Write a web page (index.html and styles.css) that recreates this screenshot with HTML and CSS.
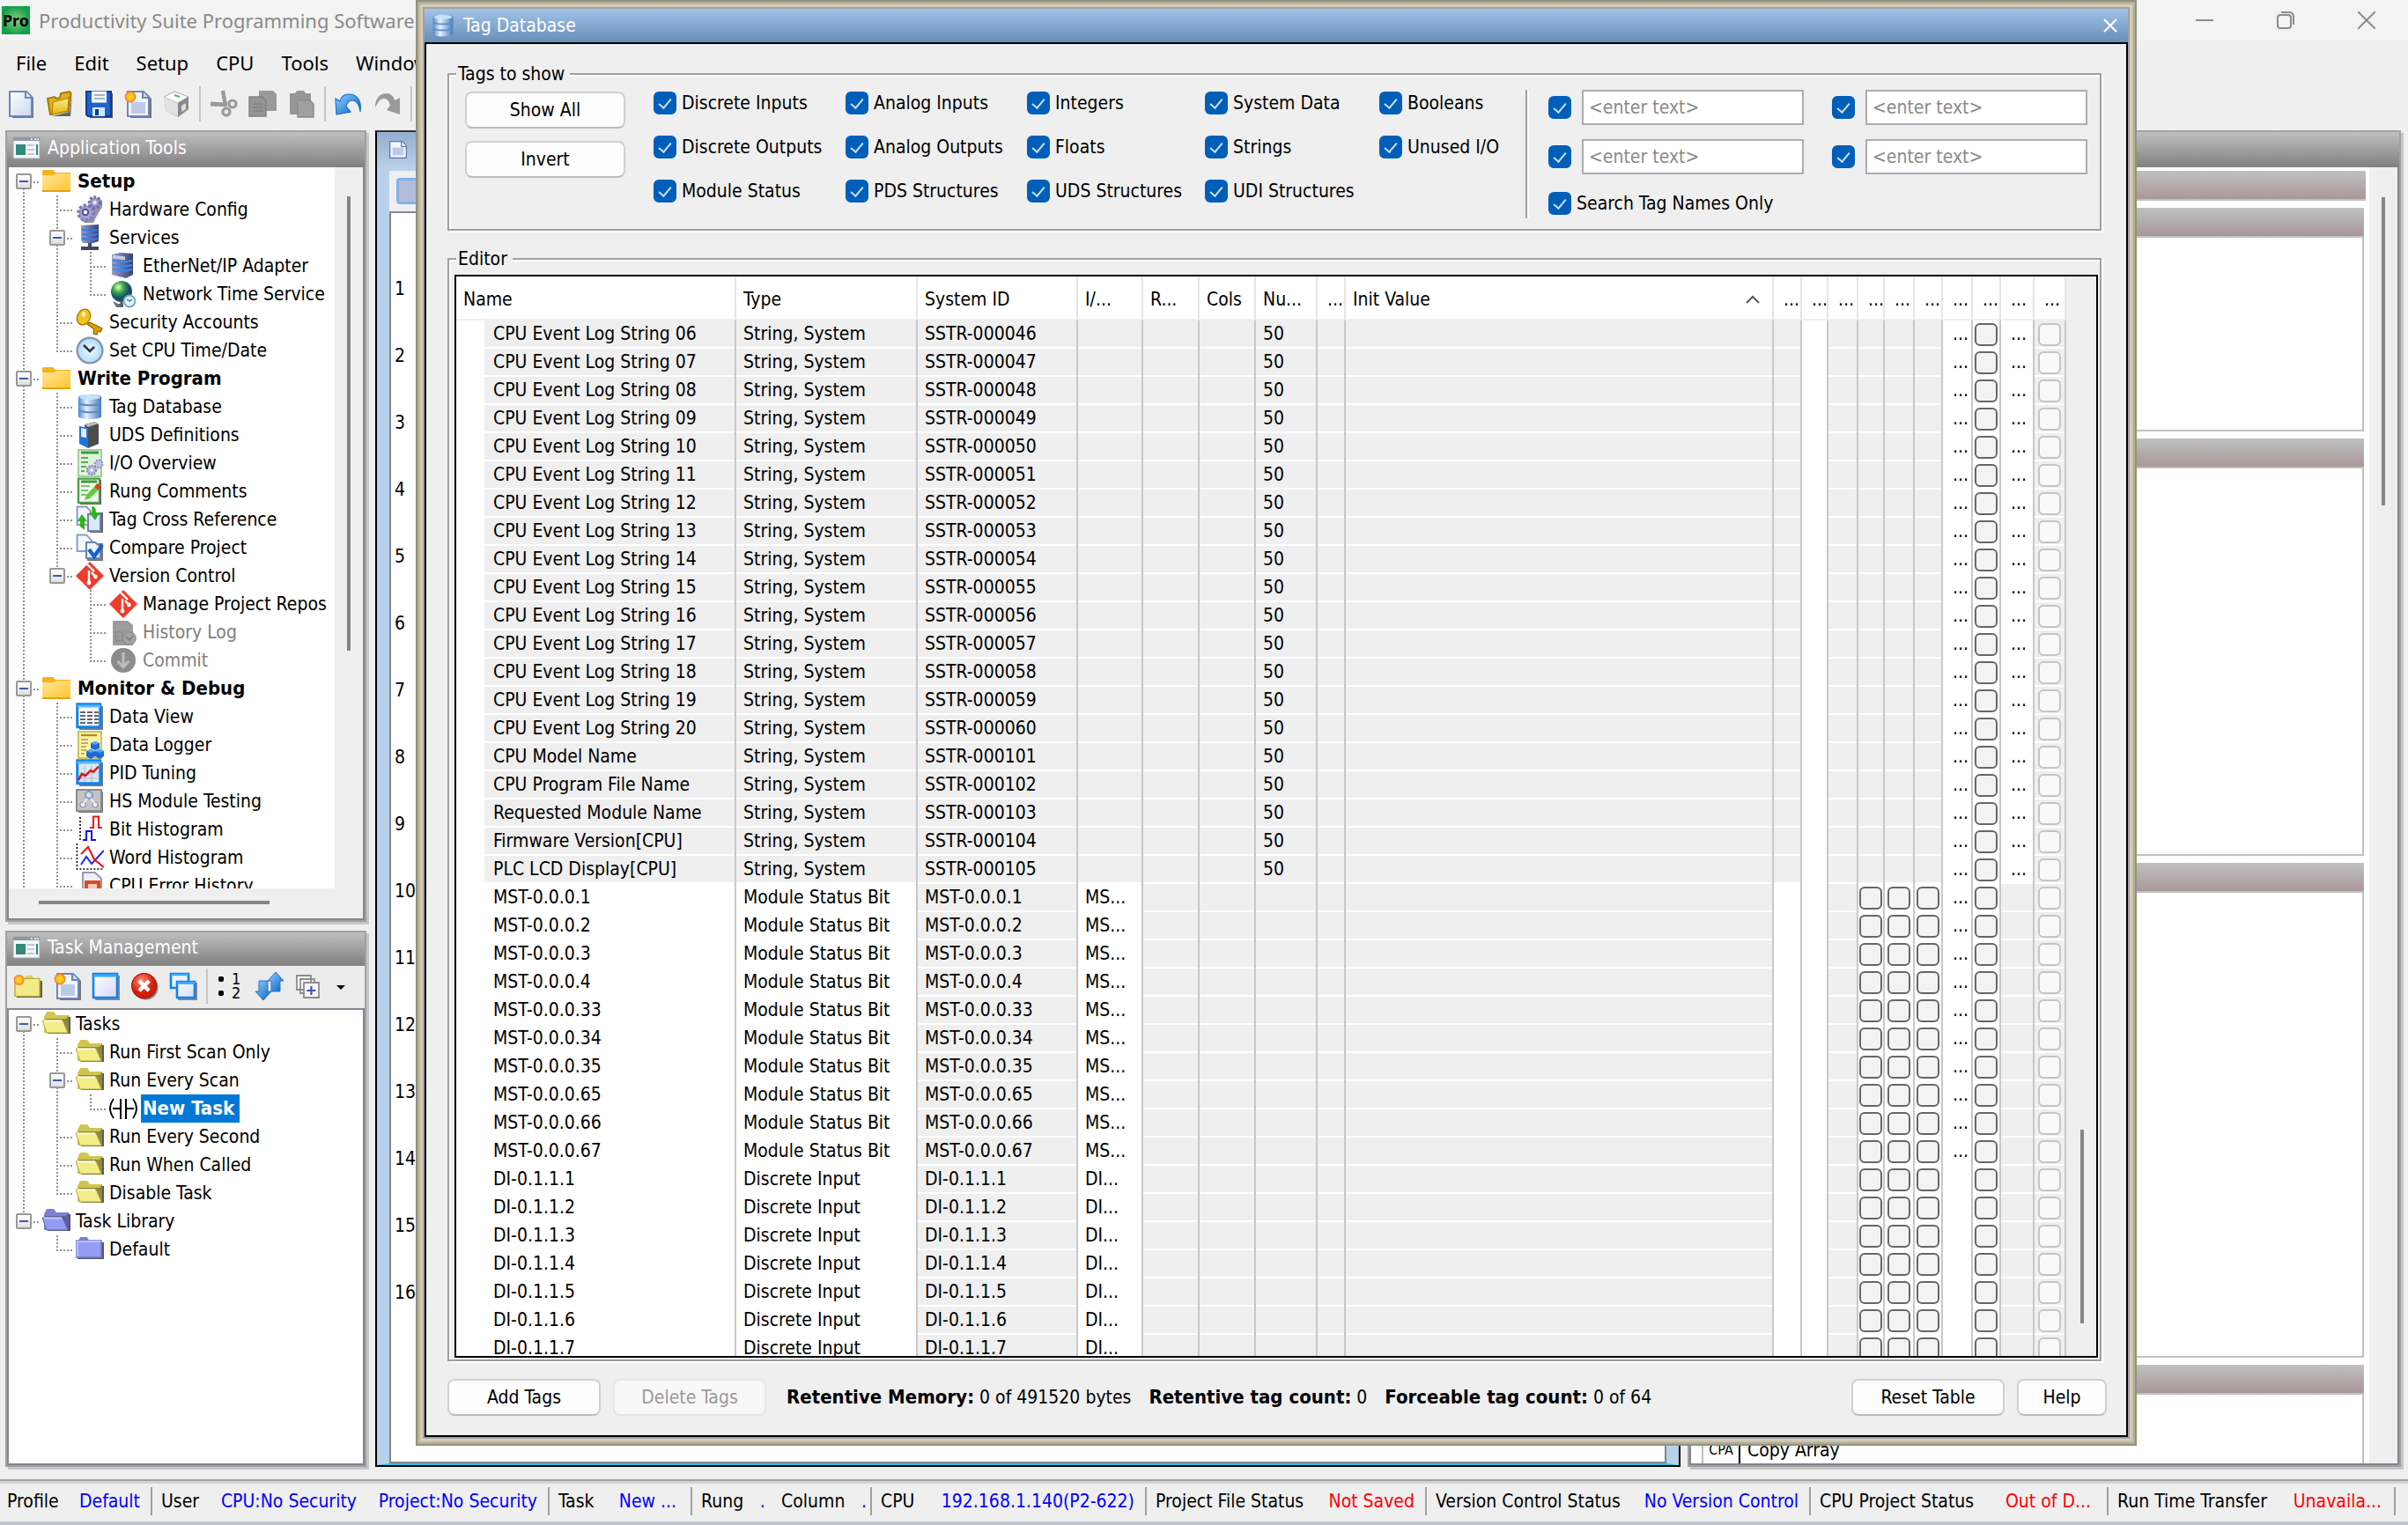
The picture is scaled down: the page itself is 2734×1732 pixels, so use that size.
FILE: index.html
```html
<!DOCTYPE html>
<html lang="en">
<head>
<meta charset="utf-8">
<title>Productivity Suite Programming Software</title>
<link rel="stylesheet" href="styles.css">
</head>
<body>
<svg class="sprite" aria-hidden="true">
  <defs>
    <linearGradient id="gPage" x1="0" y1="0" x2="1" y2="1"><stop offset="0" stop-color="#fff"/><stop offset="1" stop-color="#c9d6ee"/></linearGradient>
    <linearGradient id="gWin" x1="0" y1="0" x2="1" y2="1"><stop offset="0" stop-color="#fff"/><stop offset="1" stop-color="#d9d6fa"/></linearGradient>
    <linearGradient id="gFold" x1="0" y1="0" x2="1" y2="1"><stop offset="0" stop-color="#ffe49a"/><stop offset="1" stop-color="#ffc62e"/></linearGradient>
    <linearGradient id="gGold" x1="0" y1="0" x2="0" y2="1"><stop offset="0" stop-color="#fff3a0"/><stop offset="1" stop-color="#e8b400"/></linearGradient>
    <linearGradient id="gDb" x1="0" y1="0" x2="1" y2="0"><stop offset="0" stop-color="#4f88cf"/><stop offset=".35" stop-color="#e6f2ff"/><stop offset="1" stop-color="#4779bd"/></linearGradient>
    <linearGradient id="gSrv" x1="0" y1="0" x2="1" y2="0"><stop offset="0" stop-color="#9a9cc4"/><stop offset=".6" stop-color="#5f64a0"/><stop offset="1" stop-color="#3c3f6e"/></linearGradient>
    <linearGradient id="gArrow" x1="0" y1="0" x2="1" y2="1"><stop offset="0" stop-color="#8fd0ff"/><stop offset="1" stop-color="#0a5fc4"/></linearGradient>
    <radialGradient id="gPro"><stop offset="0" stop-color="#8fd07c"/><stop offset="1" stop-color="#14a04a"/></radialGradient>
    <radialGradient id="gRed" cx=".4" cy=".3"><stop offset="0" stop-color="#ff8a70"/><stop offset="1" stop-color="#d41c08"/></radialGradient>
    <radialGradient id="gGlobe" cx=".35" cy=".3"><stop offset="0" stop-color="#eaffd0"/><stop offset=".5" stop-color="#3faa4a"/><stop offset="1" stop-color="#14506a"/></radialGradient>
    <radialGradient id="gSpark"><stop offset="0" stop-color="#ffe21a"/><stop offset=".55" stop-color="#ffc21a"/><stop offset="1" stop-color="#ff6a3c"/></radialGradient>
    <radialGradient id="gClock"><stop offset="0" stop-color="#f2fbff"/><stop offset="1" stop-color="#a9dcfa"/></radialGradient>

    <symbol id="i-pro" viewBox="0 0 16 16"><rect width="16" height="16" fill="url(#gPro)"/></symbol>
    <symbol id="i-new" viewBox="0 0 16 16"><path d="M3 1.5h9l3 3V16H3z" fill="#777"/><path d="M1.5 1h9.500l3 3v11H1.500z" fill="url(#gPage)" stroke="#6e86b8"/><path d="M10.500 1v3.500H14" fill="#dfe8f8" stroke="#6e86b8"/></symbol>
    <symbol id="i-open" viewBox="0 0 16 16"><path d="M3.500 15l10-2.500L15 3l-1 12z" fill="#666"/><path d="M1 5l4-1 1 1 2-.5L8.500 2 13.500 1l.8 1-1.300 10L2.500 14z" fill="#e0b020" stroke="#a47c00"/><path d="M4 7l8-2 1-1-.5 8L3.500 14z" fill="url(#gGold)" stroke="#b08a08" stroke-width=".6"/></symbol>
    <symbol id="i-save" viewBox="0 0 16 16"><path d="M2 2h14v14H3z" fill="#555"/><path d="M1 1h14v14H2l-1-1z" fill="#1d63c8" stroke="#0c3c94"/><path d="M4 .8h8.500v6.500H4z" fill="#f2f5fa"/><path d="M5.500 3h6M5.500 5h6" stroke="#a9b2c4"/><path d="M4.500 10h7v5h-7z" fill="#d7e6f7"/><path d="M6 11h2v3.500H6z" fill="#0c3c94"/></symbol>
    <symbol id="i-newdoc" viewBox="0 0 16 16"><path d="M4 2h9l3 3v11H4z" fill="#777"/><path d="M2.500 1h9l3 3v11h-12z" fill="#f2f6ff" stroke="#6e86b8"/><path d="M11 1v3.500h3.500" fill="#cddaf4" stroke="#6e86b8"/><path d="M4.500 7h8v6.500h-8z" fill="#bccbe8"/><circle cx="4" cy="4" r="3.200" fill="url(#gSpark)"/></symbol>
    <symbol id="i-doc" viewBox="0 0 16 16"><path d="M.5 .5h11l4 4v11H.5z" fill="#f2f6ff" stroke="#5a76b0"/><path d="M11 .5v4.500h4.500" fill="#fff" stroke="#5a76b0"/><path d="M3 6h10v7H3z" fill="#bccbe8"/></symbol>
    <symbol id="i-cube" viewBox="0 0 16 16"><path d="M1 4l6-3 8 3v7l-6 4.500L2 12z" fill="#bbb"/><path d="M1 4l6-3 8 3-6 3.500z" fill="#fff" stroke="#aaa" stroke-width=".5"/><path d="M1 4l8 3.500V15l-7-3z" fill="#e2e2e2"/><path d="M9 7.500L15 4v7l-6 4.500z" fill="#8a8a8a"/><path d="M11 9l2.500-1.500V11L11 12.500z" fill="#ddd"/><path d="M7 3l3 1" stroke="#57b36b"/></symbol>
    <symbol id="i-cut" viewBox="0 0 16 16"><path d="M7.500 .5L9 9" stroke="#9a9a9a" stroke-width="2.200"/><path d="M.5 8L10 8.500" stroke="#9a9a9a" stroke-width="2.400"/><circle cx="13" cy="8" r="2" fill="none" stroke="#9a9a9a" stroke-width="1.600"/><circle cx="9.500" cy="12.500" r="2" fill="none" stroke="#9a9a9a" stroke-width="1.600"/></symbol>
    <symbol id="i-copy" viewBox="0 0 16 16"><path d="M6 .5h8l2 2V12H6z" fill="#9a9a9a"/><path d="M.5 4H8l2 2v9H.5z" fill="#949494" stroke="#808080" stroke-width=".7"/><path d="M2.500 8h5.500M2.500 10h5.500M2.500 12h5.500" stroke="#828282" stroke-width=".7"/></symbol>
    <symbol id="i-paste" viewBox="0 0 16 16"><path d="M1.500 2h3L5.500.5h4l1 1.500h3V14h-12z" fill="#969696"/><path d="M6 6h7l2 2v7.500H6z" fill="#a0a0a0" stroke="#8a8a8a" stroke-width=".7"/></symbol>
    <symbol id="i-undo" viewBox="0 0 16 16"><path d="M14.500 12.500c1-6.500-2-10-6.500-10-3 0-4.500 2-5 4L.5 5 1 14l8-1.500L6.500 9.500C7 7 8.500 6 10 6c2.500 0 4 3 4.500 6.500z" fill="url(#gArrow)" stroke="#1a6cc8" stroke-width=".6"/></symbol>
    <symbol id="i-redo" viewBox="0 0 16 16"><path d="M1 10C1 5 3.500 2 7.500 2 10 2 11.500 4 12 6l3-1.500V14L7.500 11.500 9.500 9C9 6.500 8 5 6 5 3 5 2.500 8 1 10z" fill="#9a9a9a"/></symbol>
    <symbol id="i-panel" viewBox="0 0 32 26"><rect x="1" y="1" width="30" height="24" fill="#f4f6f8" stroke="#9aa" stroke-width="1"/><rect x="1" y="1" width="30" height="4" fill="#8d98a8"/><path d="M21 3h2M25 3h2M28 3h2" stroke="#fff" stroke-width="1.500"/><rect x="4" y="9" width="11" height="12" fill="#2f8a78"/><path d="M17 10h8M17 15h8M17 20h8" stroke="#c5c9cf" stroke-width="2"/><path d="M28 9v12" stroke="#2f8a78" stroke-width="2"/></symbol>
    <symbol id="i-folder" viewBox="0 0 16 16"><path d="M0 2.500q0-1 1-1h5l1.500 1.500H16V13.500H0z" fill="#f6b21a"/><path d="M0 4.500h6.500L8 3.500h8v10H0z" fill="url(#gFold)"/><path d="M0 13h16v1H0z" fill="#e8a012"/></symbol>
    <symbol id="i-gears" viewBox="0 0 16 16"><path d="M2 12.500l3 3h5l2-4 3-5V3l-2-1.500z" fill="#66667c" opacity=".7"/><circle cx="5.800" cy="9.800" r="4.200" fill="#a4a4d8" stroke="#8080b8" stroke-width="2" stroke-dasharray="1.600 1"/><circle cx="5.500" cy="9.500" r="1.600" fill="#fff" stroke="#505088"/><circle cx="10.800" cy="4" r="3" fill="#9c9cd2" stroke="#7070a8" stroke-width="1.800" stroke-dasharray="1.300 .9"/><circle cx="10.800" cy="4" r="1.100" fill="#e8e8fa"/></symbol>
    <symbol id="i-service" viewBox="0 0 16 16"><path d="M3 1l10-.5V10l-3 1H4L3 9.500z" fill="url(#gSrv)"/><path d="M3.500 3.500l6 .5 3-.5M3.500 6l6 .5 3-.5M3.500 8.500l6 .5 3-.5" stroke="#2f80e8" fill="none"/><path d="M7 11h2v2h4v2H3v-2h4z" fill="#44445c"/></symbol>
    <symbol id="i-server" viewBox="0 0 16 16"><path d="M1.500 1.500l5-1 7 .5v12l-4 2-8-2z" fill="url(#gSrv)"/><path d="M2 5l7 .7 4-.7M2 7.500l7 .7 4-.7M2 10l7 .7 4-.7" stroke="#2f8cf5" fill="none"/><path d="M2 1.800l7 1v2l-7-1z" fill="#c8c8e0"/></symbol>
    <symbol id="i-globe" viewBox="0 0 16 16"><path d="M2 12l3 1.500h3v2H4z" fill="#68707c"/><circle cx="7" cy="6.500" r="6" fill="url(#gGlobe)"/><path d="M7 12v3" stroke="#555" stroke-width="1.500"/><circle cx="11.500" cy="12" r="3.200" fill="#e4f4ff" stroke="#79a9cc"/><path d="M10 11l1.500 1 1.500-1" stroke="#6a8aa8" fill="none" stroke-width=".8"/></symbol>
    <symbol id="i-key" viewBox="0 0 16 16"><path d="M8 8l7 3.500-1 2-1.500-.5-.5 2-2-.5.500-2.500L6.500 9z" fill="#e0a000" stroke="#8a6400" stroke-width=".6"/><ellipse cx="4.500" cy="5" rx="3.600" ry="4.600" transform="rotate(25 4.500 5)" fill="#f6c41a" stroke="#a87800" stroke-width=".7"/><ellipse cx="4.500" cy="3.500" rx="1" ry="1.500" fill="#fff8d8"/></symbol>
    <symbol id="i-clock" viewBox="0 0 16 16"><circle cx="8" cy="8" r="7.200" fill="url(#gClock)" stroke="#8a93a8" stroke-width="1.200"/><path d="M4.500 5L8 8.500 10.500 6" fill="none" stroke="#334" stroke-width="1.300"/></symbol>
    <symbol id="i-db" viewBox="0 0 16 16"><path d="M1.500 2.500c0-2 13-2 13 0v11c0 2-13 2-13 0z" fill="url(#gDb)"/><ellipse cx="8" cy="2.500" rx="6" ry="1.400" fill="#c4e2f6"/><path d="M1.500 6c3 1.500 10 1.500 13 0M1.500 10c3 1.500 10 1.500 13 0" stroke="#5c8cc8" fill="none"/></symbol>
    <symbol id="i-binder" viewBox="0 0 16 16"><path d="M5 2l6-1.500L13 2v11l-6 2.500z" fill="#4c4c4c"/><path d="M2 3l5 1v11.500L2 13z" fill="#1f74d8"/><path d="M3 4l3 .6v5L3 9z" fill="#e8e8fa"/><path d="M5 2l6-1.500 2 1L7 3.500z" fill="#bbb"/></symbol>
    <symbol id="i-iolist" viewBox="0 0 16 16"><path d="M1.500 .5h13v15h-13z" fill="#dff2dc" stroke="#a4cca0"/><path d="M3 2h10" stroke="#3c9c38" stroke-width="1.500"/><path d="M3 5h4M3 7.500h4M3 10h3M3 12.500h2" stroke="#58b050"/><circle cx="9" cy="12" r="2.600" fill="#b4b4dc" stroke="#8c8cc0" stroke-dasharray="1 .7"/><circle cx="13" cy="8.500" r="2.200" fill="#c0c0e4" stroke="#8c8cc0" stroke-dasharray="1 .7"/><circle cx="9" cy="12" r=".9" fill="#fff"/></symbol>
    <symbol id="i-comment" viewBox="0 0 16 16"><path d="M2.500 1.500h12v14h-12z" fill="#555"/><path d="M1.500 .8h12v13.700h-12z" fill="#f0faee" stroke="#4f9c4a" stroke-width="1.200"/><path d="M3 2.500h9" stroke="#3c9c38" stroke-width="1.500"/><path d="M3 5h5M3 7.500h4M3 10h3" stroke="#7cc474"/><path d="M5 13l1-3 5-5 2 2-5 5z" fill="#62cc3c"/><path d="M10.500 5.500L12 3.500l2.500 1.500-1.500 2.500z" fill="#e0402c"/></symbol>
    <symbol id="i-xref" viewBox="0 0 16 16"><path d="M8 4h7.500v11.500H8z" fill="#666"/><path d="M.8.8H6l2.500 2.500V11H.8z" fill="#f4f7ff" stroke="#8a9cc0"/><path d="M7 5h7v9.500H7z" fill="#dce8fa" stroke="#6e82ac"/><path d="M9 .5c2 0 2.500 1.500 2.500 3.500H13.500L11 8.500 7.500 4h1.800z" fill="#2cb41c"/><path d="M.8 9l2.700-4L6.500 9H5v5L2.500 12V9z" fill="#2cb41c"/></symbol>
    <symbol id="i-compare" viewBox="0 0 16 16"><path d="M.8.8H6l3 3V10H.8z" fill="#f4f7ff" stroke="#8a9cc0"/><path d="M6.500 5.500H15.500v10H6.500z" fill="#777"/><path d="M6 5h5l3 2.500V14H6z" fill="#eef3ff" stroke="#6e82ac"/><path d="M7.500 9l3 4L15 6.500" fill="none" stroke="#1464d0" stroke-width="2.200"/></symbol>
    <symbol id="i-git" viewBox="0 0 16 16"><path d="M8 0l8 8-8 8-8-8z" fill="#f03c2e"/><path d="M6.500 1.500l4 4M7.500 5v7M9 6l2.500 3" stroke="#fff" stroke-width="1.200" fill="none"/><circle cx="7.500" cy="12" r="1.200" fill="#fff"/><circle cx="11.200" cy="8.500" r="1.200" fill="#fff"/></symbol>
    <symbol id="i-history" viewBox="0 0 16 16"><path d="M2 1.500h8.500L13.500 4v11.500H2z" fill="#9c9c9c"/><path d="M3.500 8h4v5h-4zM5 9v4" stroke="#8a8a8a" fill="none" stroke-width=".7"/><circle cx="11.500" cy="11.500" r="3.600" fill="#a4a4a4" stroke="#8c8c8c" stroke-width=".6"/><path d="M9.500 10.500l2 2 2-2.500" stroke="#808080" fill="none"/></symbol>
    <symbol id="i-commit" viewBox="0 0 16 16"><circle cx="8" cy="8" r="7" fill="#8c8c8c"/><path d="M8 3.500v8M4.800 8.500L8 11.800l3.200-3.300" stroke="#bcbcbc" stroke-width="1.600" fill="none"/></symbol>
    <symbol id="i-dataview" viewBox="0 0 16 16"><path d="M2 2h13.500v13.500H2z" fill="#777"/><path d="M.9.900h13v13H.9z" fill="#f8f8ff" stroke="#0c84f0" stroke-width="1.500"/><path d="M1 2h13" stroke="#5cb8ff" stroke-width="1.500"/><path d="M2.500 5.500h3M6.500 5.500h3M10.500 5.500h2.500M2.500 7.500h3M6.500 7.500h3M10.500 7.500h2.500M2.500 9.500h3M6.500 9.500h3M10.500 9.500h2.500M2.500 11.500h3M6.500 11.500h3M10.500 11.500h2.500" stroke="#666"/></symbol>
    <symbol id="i-logger" viewBox="0 0 16 16"><path d="M1.500 .5h13v15h-13z" fill="#fbf4a8" stroke="#d0c060"/><path d="M3 2.500h9" stroke="#b08a1c" stroke-width="1.200"/><path d="M3 5h4M3 7h4M3 9h3M3 11h3M3 13h2" stroke="#b0983c" stroke-width=".8"/><path d="M8.500 7l2.500-1 2.500 1v3l-2.500 1-2.500-1zM6 11.500l2.500-1 2.500 1v3l-2.500 1.500L6 14.500zM11 11.500l2.500-1 2.500 1v3L13.500 16 11 14.500z" fill="#1a6cd8"/><path d="M8.500 7l2.500-1 2.500 1-2.500 1zM6 11.500l2.500-1 2.500 1-2.500 1zM11 11.500l2.500-1 2.500 1-2.500 1z" fill="#58a4f4"/></symbol>
    <symbol id="i-pid" viewBox="0 0 16 16"><path d="M2 2h13.500v13.500H2z" fill="#777"/><path d="M.9.900h13v13H.9z" fill="#dce6ee" stroke="#0c84f0" stroke-width="1.500"/><path d="M1 2h13" stroke="#5cb8ff" stroke-width="1.500"/><path d="M5 4v9M9 4v9M2 8h11M2 11h11" stroke="#b4c0cc" stroke-width=".6"/><path d="M1.500 12l2-3.500 2 1 3-3 1.500.8 3-3" stroke="#d41c1c" stroke-width="1.300" fill="none"/></symbol>
    <symbol id="i-module" viewBox="0 0 16 16"><path d="M1.500 2.500h14v12h-14z" fill="#777"/><path d="M.5 1.500h14v12H.5z" fill="#c4c4c4" stroke="#8c8c8c"/><circle cx="7.500" cy="4.500" r="2" fill="#d8e0f4" stroke="#8898bc"/><circle cx="4" cy="10" r="1.500" fill="#eef" stroke="#8898bc" stroke-width=".6"/><circle cx="11" cy="10" r="1.500" fill="#eef" stroke="#8898bc" stroke-width=".6"/><path d="M6.500 6.500L4.500 9M8.500 6.500l2 2.500" stroke="#eef"/></symbol>
    <symbol id="i-bits" viewBox="0 0 16 16"><path d="M2.500 1v14" stroke="#000" stroke-width=".8" stroke-dasharray="1 1"/><path d="M8 7h2V.7h3V7h2" stroke="#f01010" fill="none"/><path d="M4 14h2V9h3v5h2.500" stroke="#1010f0" fill="none"/></symbol>
    <symbol id="i-words" viewBox="0 0 16 16"><path d="M.7 0v14.500H16" stroke="#000" stroke-width=".8" stroke-dasharray="1 1" fill="none"/><path d="M3 12l3-4.500 3 4L16 4" stroke="#2424f0" fill="none"/><path d="M3 6l4-4 3.500 7L16 13.500" stroke="#f01010" fill="none"/></symbol>
    <symbol id="i-error" viewBox="0 0 16 16"><path d="M4 .5h7l3.500 3.500V16H4z" fill="#f0f0f8" stroke="#9898b0"/><path d="M5 5h9v9H5z" fill="#e04a20"/><path d="M7 7h5v7H7z" fill="#fff" opacity=".7"/></symbol>

    <symbol id="i-yopen" viewBox="0 0 16 16"><path d="M3 4h13v9.500H3z" fill="#5c5c4c"/><path d="M1 4l1.500-3h4L8 3h7v10H1z" fill="#cfc650"/><path d="M1 5h12.500L15 3v10h-1z" fill="#8e8840"/><path d="M0 6h11.500L14.500 13H2.500z" fill="#f4ec86" stroke="#b8ae40" stroke-width=".5"/><path d="M1 6.200h10" stroke="#fffce0"/></symbol>
    <symbol id="i-bopen" viewBox="0 0 16 16"><path d="M3 4h13v9.500H3z" fill="#555568"/><path d="M1 4l1.500-3h4L8 3h7v10H1z" fill="#7c80d0"/><path d="M1 5h12.500L15 3v10h-1z" fill="#5c609c"/><path d="M0 6h11.500L14.500 13H2.500z" fill="#949cf4" stroke="#6064b0" stroke-width=".5"/><path d="M1 6.200h10" stroke="#c8ccf8"/></symbol>
    <symbol id="i-bclosed" viewBox="0 0 16 16"><path d="M1 4h15v9.500H1z" fill="#555568"/><path d="M1.500 3l1-2h4l1 2z" fill="#7c80d0"/><path d="M.5 3h14v9.500H.5z" fill="#949cf4" stroke="#7478cc" stroke-width=".8"/><path d="M1 12V3.500h13" stroke="#c8ccf8" fill="none" stroke-width=".7"/></symbol>
    <symbol id="i-rungs" viewBox="0 0 32 32"><path d="M5 5Q-3 16 5 27M27 5q8 11 0 22" fill="none" stroke="#000" stroke-width="2"/><path d="M4 16h8M20 16h8M13 5v23M19 5v23" stroke="#000" stroke-width="2"/></symbol>
    <symbol id="i-newfolder" viewBox="0 0 16 16"><path d="M1.500 5H16v9.500H1.500z" fill="#66623c"/><path d="M6 3.500L7 2h3l1 1.500z" fill="#d8ce60"/><path d="M.5 3.700h14v10H.5z" fill="#f2ea84" stroke="#b8ae48" stroke-width=".7"/><circle cx="2.800" cy="4.500" r="3" fill="url(#gSpark)"/></symbol>
    <symbol id="i-window" viewBox="0 0 16 16"><path d="M2 2h14v14H2z" fill="#888"/><path d="M1 1h13.500v13.500H1z" fill="url(#gWin)" stroke="#0c84f0" stroke-width="1.300"/><path d="M1 2h13.500" stroke="#3ca8ff" stroke-width="1.600"/></symbol>
    <symbol id="i-delete" viewBox="0 0 16 16"><circle cx="8.800" cy="8.800" r="7" fill="#888"/><circle cx="7.800" cy="7.800" r="7" fill="url(#gRed)" stroke="#b01404" stroke-width=".6"/><path d="M5 5l5.600 5.600M10.600 5L5 10.600" stroke="#fff" stroke-width="2.200"/></symbol>
    <symbol id="i-cascade" viewBox="0 0 16 16"><path d="M1 1h10v8H1z" fill="#eef4ff" stroke="#0c84f0" stroke-width="1.300"/><path d="M1 1.500h10" stroke="#3ca8ff" stroke-width="1.200"/><path d="M5 6h11v10H5z" fill="#888"/><path d="M4.500 5.500H14.500v9h-10z" fill="url(#gWin)" stroke="#0c84f0" stroke-width="1.300"/><path d="M4.500 6.200h10" stroke="#3ca8ff" stroke-width="1.500"/></symbol>
    <symbol id="i-updown" viewBox="0 0 16 16"><path d="M2 5h5v6h2l-4.500 5L0 11h2z" fill="url(#gArrow)" stroke="#2a74c4" stroke-width=".5"/><path d="M11.500 0L16 5h-2v6H9V5H7z" fill="url(#gArrow)" stroke="#2a74c4" stroke-width=".5"/></symbol>
    <symbol id="i-stack" viewBox="0 0 16 16"><g fill="#f6f6f6" stroke="#8c8c8c" stroke-width=".9"><path d="M1.500 2h8v8h-8zM3.500 4h8v8h-8z"/><path d="M5.500 6h8.500v8.500H5.500z"/></g><path d="M9.700 8v5M7.200 10.500h5" stroke="#3c54a8" stroke-width="1.100"/></symbol>
  </defs>
</svg>

<div class="app">
  <header class="titlebar">
    <span class="app-logo"><svg class="ic"><use href="#i-pro"/></svg><b>Pro</b></span>
    <span class="app-title">Productivity Suite Programming Software</span>
    <div class="win-buttons">
      <button type="button" aria-label="Minimize"><svg viewBox="0 0 20 20"><path d="M0 10h20"/></svg></button>
      <button type="button" aria-label="Restore"><svg viewBox="0 0 20 20"><rect x="1" y="4" width="15" height="15" rx="3"/><path d="M5 1h9q5 0 5 5v9"/></svg></button>
      <button type="button" aria-label="Close"><svg viewBox="0 0 20 20"><path d="M0 0l20 20M20 0L0 20"/></svg></button>
    </div>
  </header>
  <nav class="menubar" aria-label="Main menu">
    <button type="button">File</button><button type="button">Edit</button><button type="button">Setup</button><button type="button">CPU</button><button type="button">Tools</button><button type="button">Window</button>
  </nav>
  <div class="toolbar">
    <button type="button" aria-label="New"><svg class="ic"><use href="#i-new"/></svg></button>
    <button type="button" aria-label="Open"><svg class="ic"><use href="#i-open"/></svg></button>
    <button type="button" aria-label="Save"><svg class="ic"><use href="#i-save"/></svg></button>
    <button type="button" aria-label="New task"><svg class="ic"><use href="#i-newdoc"/></svg></button>
    <button type="button" aria-label="Hardware"><svg class="ic"><use href="#i-cube"/></svg></button>
    <span class="bar-sep"></span>
    <button type="button" aria-label="Cut" disabled><svg class="ic"><use href="#i-cut"/></svg></button>
    <button type="button" aria-label="Copy" disabled><svg class="ic"><use href="#i-copy"/></svg></button>
    <button type="button" aria-label="Paste" disabled><svg class="ic"><use href="#i-paste"/></svg></button>
    <span class="bar-sep"></span>
    <button type="button" aria-label="Undo"><svg class="ic"><use href="#i-undo"/></svg></button>
    <button type="button" aria-label="Redo" disabled><svg class="ic"><use href="#i-redo"/></svg></button>
    <span class="bar-sep"></span>
  </div>

  <main class="workspace">
    <div class="side">
      <section class="panel">
        <h2 class="panel-head"><svg class="panel-ic"><use href="#i-panel"/></svg>Application Tools</h2>
        <div class="scroll-grid">
          <ul class="tree" id="tools-tree"></ul>
          <div class="vscroll"><span class="thumb"></span></div>
          <div class="hscroll"><span class="thumb"></span></div>
        </div>
      </section>
      <section class="panel">
        <h2 class="panel-head short"><svg class="panel-ic"><use href="#i-panel"/></svg>Task Management</h2>
        <div class="task-bar">
          <button type="button" aria-label="New folder"><svg class="ic"><use href="#i-newfolder"/></svg></button>
          <button type="button" aria-label="New task"><svg class="ic"><use href="#i-newdoc"/></svg></button>
          <button type="button" aria-label="Open task"><svg class="ic"><use href="#i-window"/></svg></button>
          <button type="button" aria-label="Delete task"><svg class="ic"><use href="#i-delete"/></svg></button>
          <button type="button" aria-label="Cascade"><svg class="ic"><use href="#i-cascade"/></svg></button>
          <span class="bar-sep"></span>
          <button type="button" class="order" aria-label="Order"><span>1</span><span>2</span></button>
          <button type="button" aria-label="Move"><svg class="ic"><use href="#i-updown"/></svg></button>
          <button type="button" aria-label="Expand all"><svg class="ic"><use href="#i-stack"/></svg></button>
          <span class="caret"></span>
        </div>
        <ul class="tree task-tree" id="task-tree"></ul>
      </section>
    </div>

    <section class="editor">
      <div class="editor-head"><svg class="doc-ic"><use href="#i-doc"/></svg></div>
      <div class="editor-frame">
        <div class="editor-tools"><span class="editor-btn"></span></div>
        <ol class="rungs" id="rungs"></ol>
      </div>
    </section>

    <section class="panel instr">
      <div class="panel-head"></div>
      <div class="instr-body">
        <div class="instr-list">
          <div class="group g0"><div class="bar"></div></div>
          <div class="group g1"><div class="bar"></div></div>
          <div class="group g2"><div class="bar"></div></div>
          <div class="group g3"><div class="bar"></div></div>
          <div class="group g4"><div class="bar"></div><div class="instr-item"><span class="code">CPA</span><span>Copy Array</span></div></div>
        </div>
        <div class="vscroll"><span class="thumb"></span></div>
      </div>
    </section>
  </main>

  <footer class="status">
    <div class="seg s1"><span>Profile</span><span class="blue">Default</span></div>
    <div class="seg s2"><span>User</span><span class="blue">CPU:No Security</span><span class="blue">Project:No Security</span></div>
    <div class="seg s3"><span>Task</span><span class="blue">New ...</span></div>
    <div class="seg s4"><span>Rung</span><span class="blue">.</span><span>Column</span><span class="blue">.</span></div>
    <div class="seg s5"><span>CPU</span><span class="blue">192.168.1.140(P2-622)</span></div>
    <div class="seg s6"><span>Project File Status</span><span class="red">Not Saved</span></div>
    <div class="seg s7"><span>Version Control Status</span><span class="blue">No Version Control</span></div>
    <div class="seg s8"><span>CPU Project Status</span><span class="red">Out of D...</span></div>
    <div class="seg s9"><span>Run Time Transfer</span><span class="red">Unavaila...</span></div>
  </footer>
</div>

<div class="dialog" role="dialog" aria-labelledby="dlg-title">
  <div class="dlg-head">
    <svg class="ic"><use href="#i-db"/></svg><span id="dlg-title">Tag Database</span>
    <button type="button" class="dlg-close" aria-label="Close"><svg viewBox="0 0 16 16"><path d="M1 1l14 14M15 1L1 15"/></svg></button>
  </div>
  <div class="dlg-body">
    <fieldset class="box">
      <legend>Tags to show</legend>
      <div class="filters">
        <div class="filter-btns"><button type="button" class="btn">Show All</button><button type="button" class="btn">Invert</button></div>
        <div class="checks">
          <label><input type="checkbox" checked>Discrete Inputs</label>
          <label><input type="checkbox" checked>Analog Inputs</label>
          <label><input type="checkbox" checked>Integers</label>
          <label><input type="checkbox" checked>System Data</label>
          <label><input type="checkbox" checked>Booleans</label>
          <label><input type="checkbox" checked>Discrete Outputs</label>
          <label><input type="checkbox" checked>Analog Outputs</label>
          <label><input type="checkbox" checked>Floats</label>
          <label><input type="checkbox" checked>Strings</label>
          <label><input type="checkbox" checked>Unused I/O</label>
          <label><input type="checkbox" checked>Module Status</label>
          <label><input type="checkbox" checked>PDS Structures</label>
          <label><input type="checkbox" checked>UDS Structures</label>
          <label><input type="checkbox" checked>UDI Structures</label>
        </div>
        <div class="search">
          <div class="search-grid">
            <input type="checkbox" checked aria-label="Use search 1"><input type="text" placeholder="&lt;enter text&gt;" aria-label="Search 1">
            <input type="checkbox" checked aria-label="Use search 2"><input type="text" placeholder="&lt;enter text&gt;" aria-label="Search 2">
            <input type="checkbox" checked aria-label="Use search 3"><input type="text" placeholder="&lt;enter text&gt;" aria-label="Search 3">
            <input type="checkbox" checked aria-label="Use search 4"><input type="text" placeholder="&lt;enter text&gt;" aria-label="Search 4">
          </div>
          <label><input type="checkbox" checked>Search Tag Names Only</label>
        </div>
      </div>
    </fieldset>
    <fieldset class="box grow">
      <legend>Editor</legend>
      <div class="grid-box">
        <div class="table-wrap">
          <table>
            <colgroup>
              <col class="c-name"><col class="c-type"><col class="c-id"><col class="c-io"><col class="c-rc"><col class="c-rc"><col class="c-num"><col class="c-32"><col>
              <col class="c-32"><col class="c-30"><col class="c-34"><col class="c-30"><col class="c-34"><col class="c-32"><col class="c-34"><col class="c-32"><col class="c-38"><col class="c-36">
            </colgroup>
            <thead><tr>
              <th>Name</th><th>Type</th><th>System ID</th><th>I/...</th><th>R...</th><th>Cols</th><th>Nu...</th><th class="d">...</th>
              <th><span class="sorted">Init Value<svg viewBox="0 0 16 10"><path d="M1 9l7-7 7 7"/></svg></span></th>
              <th class="d">...</th><th class="d">...</th><th class="d">...</th><th class="d">...</th><th class="d">...</th><th class="d">...</th><th class="d">...</th><th class="d">...</th><th class="d">...</th><th class="d">...</th>
            </tr></thead>
            <tbody id="rows"></tbody>
          </table>
        </div>
        <div class="vscroll"><span class="thumb"></span></div>
      </div>
    </fieldset>
    <div class="dlg-foot">
      <button type="button" class="btn">Add Tags</button>
      <button type="button" class="btn" disabled>Delete Tags</button>
      <div class="counts">
        <p><b>Retentive Memory:</b> 0 of 491520 bytes</p>
        <p><b>Retentive tag count:</b> 0</p>
        <p><b>Forceable tag count:</b> 0 of 64</p>
      </div>
      <button type="button" class="btn">Reset Table</button>
      <button type="button" class="btn small">Help</button>
    </div>
  </div>
</div>
<script src="app.js"></script>
</body>
</html>
```
FILE: styles.css
```css
* { box-sizing: border-box; }
html, body { height: 100%; }
body {
  margin: 0; overflow: hidden; background: #efefef; color: #000;
  font: 21px/26px "DejaVu Sans Condensed", "Noto Sans", sans-serif;
}
button, input { font: inherit; color: inherit; margin: 0; }
button { padding: 0; border: 0; background: none; }
ul, ol, p, h2 { margin: 0; padding: 0; list-style: none; }
.sprite { position: absolute; width: 0; height: 0; }
.ic { display: block; width: 32px; height: 32px; flex: none; }
.blue { color: #0000ff; }
.red { color: #ff0000; }

.app { display: flex; flex-direction: column; height: 100vh; }

/* Title, menu and tool bars */
.titlebar { display: flex; align-items: center; gap: 10px; height: 46px; padding-left: 2px; background: #f3f3f3; color: #8a8a8a; font: 22px/30px "Noto Sans", sans-serif; }
.app-logo { display: grid; width: 32px; height: 32px; }
.app-logo > * { grid-area: 1 / 1; }
.app-logo b { color: #000; font-size: 18px; line-height: 32px; text-align: center; z-index: 1; }
.win-buttons { display: flex; gap: 72px; margin-left: auto; padding-right: 37px; }
.win-buttons svg { display: block; width: 20px; height: 20px; fill: none; stroke: #8c8c8c; stroke-width: 2; }
.menubar { display: flex; align-items: center; gap: 31px; height: 50px; padding-left: 18px; font: 22px/30px "Noto Sans", sans-serif; }
.toolbar { display: flex; align-items: center; gap: 12px; height: 44px; padding-left: 8px; }
.bar-sep { width: 2px; height: 40px; margin: 0 -2px; background: #c6c6c6; }

.workspace { flex: 1; min-height: 0; display: grid; grid-template-columns: 412px minmax(0, 1fr) 812px; gap: 8px; padding: 8px 6px 14px 6px; }

/* Docked panels */
.side { display: grid; grid-template-rows: minmax(0, 59fr) minmax(0, 40fr); gap: 10px; padding-right: 2px; min-height: 0; }
.panel { display: flex; flex-direction: column; min-height: 0; border: 2px solid #a0a0a0; box-shadow: 3px 3px 0 #c6c6c6; }
.panel-head { display: flex; align-items: center; gap: 8px; height: 40px; flex: none; padding: 0 6px 4px; background: linear-gradient(#bfbfbf, #808080); color: #fff; font-size: 21px; font-weight: normal; }
.panel-head.short { height: 38px; }
.panel-ic { width: 32px; height: 26px; }
.scroll-grid { flex: 1; min-height: 0; display: grid; grid-template: minmax(0, 1fr) 34px / minmax(0, 1fr) 32px; border: 2px solid #828790; border-top: 0; }
.vscroll, .hscroll { position: relative; background: #efefef; }
.thumb { position: absolute; background: #858585; }
.scroll-grid .vscroll .thumb { left: 14px; width: 4px; top: 4%; height: 63%; }
.hscroll .thumb { top: 14px; height: 4px; left: 34px; right: 74px; }

.tree { background: #fff; overflow: hidden; }
.tree li { display: flex; align-items: center; height: 32px; white-space: nowrap; }
.tree .ic { margin-right: 6px; }
.tree .off { color: #808080; }
.tree .root { font-weight: bold; font-size: 22px; padding-left: 2px; }
.tree .sel { background: #0078d7; color: #fff; font-weight: bold; font-size: 22px; line-height: 32px; margin-left: -2px; padding: 0 6px 0 2px; }
.guide { width: 38px; height: 32px; flex: none; padding: 7px 8px; background-repeat: no-repeat; --v: repeating-linear-gradient(#909090 0 2px, #fff 2px 4px); --h: repeating-linear-gradient(90deg, #909090 0 2px, #fff 2px 4px); }
.g-v { background-image: var(--v); background-size: 2px 32px; background-position: 16px 0; }
.g-t, .g-B { background-image: var(--v), var(--h); background-size: 2px 32px, 20px 2px; background-position: 16px 0, 16px 16px; }
.g-l, .g-E { background-image: var(--v), var(--h); background-size: 2px 16px, 20px 2px; background-position: 16px 0, 16px 16px; }
.g-R { background-image: var(--v), var(--h); background-size: 2px 16px, 20px 2px; background-position: 16px 16px, 16px 16px; }
.toggle { display: block; width: 18px; height: 18px; border: 2px solid #989898; border-radius: 2px; background: linear-gradient(#3c5aa8, #3c5aa8) 2px 6px / 10px 2px no-repeat, linear-gradient(#fff, #dedede); }

.task-bar { display: flex; align-items: center; gap: 12px; height: 48px; flex: none; padding: 0 0 2px 8px; background: #ececec; }
.order { display: flex; flex-direction: column; width: 32px; padding-left: 2px; font: 18px/16px "DejaVu Sans Condensed", sans-serif; }
.order span { display: flex; align-items: center; gap: 9px; }
.order span::before { content: ""; width: 6px; height: 6px; border-radius: 2px; background: #000; }
.caret { border: 5px solid transparent; border-top-color: #000; margin: 8px 0 0 4px; }
.task-tree { flex: 1; border: 2px solid #828790; }

/* Ladder editor window */
.editor { display: flex; flex-direction: column; min-height: 0; border: 2px solid #000; border-top-color: #333; }
.editor-head { height: 44px; flex: none; padding: 10px 14px; background: linear-gradient(#94add0, #bcd2ea); }
.doc-ic { width: 20px; height: 20px; }
.editor-frame { flex: 1; min-height: 0; display: flex; flex-direction: column; border: solid #b9d0ea; border-width: 0 14px 2px 14px; border-bottom-color: #28c4e0; }
.editor-tools { height: 48px; flex: none; padding: 8px; background: #efefef; border-bottom: 2px solid #828790; }
.editor-btn { display: block; width: 60px; height: 30px; border: 3px solid #7fb2ec; border-radius: 4px; background: #b4bcd8; }
.rungs { flex: 1; min-height: 0; overflow: hidden; padding: 48px 0 0 4px; background: #fff; border: 2px solid #828790; border-top: 0; }
.rungs li { height: 76px; line-height: 76px; }

/* Instruction list */
.instr { margin-right: 2px; }
.instr-body { flex: 1; min-height: 0; display: grid; grid-template-columns: minmax(0, 1fr) 32px; border: 2px solid #828790; border-top: 0; }
.instr-list { display: flex; flex-direction: column; gap: 8px; overflow: hidden; padding: 4px 6px 0 12px; background: #fff; }
.instr .thumb { left: 14px; width: 4px; top: 34px; height: 350px; }
.group { flex: none; border: 2px solid #c0c0c0; border-top: 0; }
.group .bar { height: 34px; margin: 0 -2px; background: linear-gradient(#c0c0c0, #a89896); border-bottom: 2px solid #c0c0c0; }
.g0 { height: 34px; border: 0; }
.g1 { height: 254px; }
.g2 { height: 474px; }
.g3 { height: 562px; }
.g4 { height: 300px; }
.instr-item { display: flex; align-items: center; gap: 8px; height: 34px; margin-top: 46px; }
.code { display: flex; align-items: center; justify-content: center; width: 42px; height: 34px; border-right: 2px solid #000; font-size: 16px; }

/* Status bar */
.status { display: flex; align-items: center; height: 52px; flex: none; border-top: 2px solid #a0a0a0; border-bottom: 4px solid #bcc4d2; box-shadow: inset 0 3px 0 #d2d2d2; }
.seg { display: flex; justify-content: space-between; height: 32px; line-height: 32px; padding: 0 12px 0 10px; border-right: 2px solid #a0a0a0; white-space: nowrap; flex: none; }
.s1 { width: 173px; padding-left: 8px; }
.s2 { width: 451px; }
.s3 { width: 162px; padding-right: 16px; }
.s4 { width: 204px; padding-right: 4px; }
.s5 { width: 312px; }
.s6 { width: 318px; }
.s7 { width: 436px; }
.s8 { width: 338px; padding-right: 18px; }
.s9 { width: 326px; padding-right: 14px; }

/* Tag Database window */
.dialog {
  position: absolute; left: 472px; right: 308px; top: 0; bottom: 90px; display: flex; flex-direction: column;
  padding: 8px; border: 2px solid #90937e; background: #efefef;
  box-shadow: inset 0 0 0 8px #a2a0a0;
  box-shadow: inset 0 0 0 2px #b3ac98, inset 0 0 0 4px #cbc2ae, inset 0 0 0 6px #d8cebc, inset 0 0 0 8px #a2a0a0;
}
.dlg-head { display: flex; align-items: center; gap: 6px; height: 38px; flex: none; padding: 0 12px 0 4px; background: linear-gradient(#a2c3e8, #688eb8); color: #fff; }
.dlg-head .ic { width: 34px; height: 28px; }
.dlg-close { margin-left: auto; }
.dlg-close svg { display: block; width: 16px; height: 16px; fill: none; stroke: #fff; stroke-width: 2; }
.dlg-body { flex: 1; min-height: 0; display: flex; flex-direction: column; border: 2px solid #000; padding: 22px 22px 22px 24px; }
.box { min-width: 0; margin: 0 6px 0 0; padding: 0; border: 2px solid #a0a0a0; box-shadow: inset 2px 2px 0 #fff, 2px 2px 0 #fff; }
.box legend { height: 24px; line-height: 24px; margin-left: 8px; padding: 0 6px 0 2px; background: #efefef; }
.grow { flex: 1; min-height: 0; margin-top: 20px; display: flex; flex-direction: column; }

.btn { width: 174px; height: 42px; border: 2px solid #d0d0d0; border-bottom-color: #bdbdbd; border-radius: 8px; background: #fdfdfd; flex: none; }
.btn.small { width: 102px; }
.btn:disabled { color: #9a9a9a; border-color: #e6e6e6; background: #f8f8f8; }

input[type="checkbox"] { appearance: none; display: grid; place-items: center; width: 26px; height: 26px; flex: none; border: 2px solid #666; border-radius: 6px; background: #f3f3f3; }
input[type="checkbox"]:disabled { border-color: #c4c4c4; background: #f9f9f9; }
input[type="checkbox"]:checked { border-color: #005fb8; background: #005fb8; }
input[type="checkbox"]:checked::before { content: ""; width: 6px; height: 12px; margin-top: -3px; border: solid #cfe0f2; border-width: 0 2px 2px 0; transform: rotate(40deg); }
input[type="text"] { width: 100%; height: 40px; padding: 0 6px; border: 2px solid #abadb3; background: #fff; border-radius: 0; }
input::placeholder { color: #8a8a8a; opacity: 1; }
label { display: flex; align-items: center; gap: 6px; white-space: nowrap; height: 26px; }

.filters { display: flex; padding: 6px 14px 12px 18px; height: 164px; }
.filter-btns { display: flex; flex-direction: column; gap: 14px; padding-top: 2px; margin-right: 32px; }
.filter-btns .btn { width: 182px; }
.checks { display: grid; grid-template-columns: 218px 206px 202px 198px 166px; grid-auto-rows: 26px; row-gap: 24px; padding-top: 2px; border-right: 2px solid #a0a0a0; box-shadow: 2px 0 0 #fff; flex: none; }
.search { flex: 1; padding-left: 24px; }
.search-grid { display: grid; grid-template-columns: 26px minmax(0, 1fr) 46px minmax(0, 1fr); column-gap: 12px; row-gap: 16px; align-items: center; justify-items: end; margin-bottom: 20px; }

/* Tag table */
.grid-box { flex: 1; min-height: 0; display: flex; margin: 6px 2px 2px 6px; border: 2px solid #000; background: #fff; }
.table-wrap { flex: 1; min-width: 0; overflow: hidden; }
.grid-box .vscroll { width: 34px; flex: none; }
.grid-box .thumb { left: 16px; width: 4px; top: 79%; height: 18%; }
table { width: 100%; table-layout: fixed; border-collapse: separate; border-spacing: 0; }
.c-name { width: 318px; } .c-type { width: 206px; } .c-id { width: 182px; } .c-io { width: 74px; } .c-rc { width: 64px; } .c-num { width: 70px; }
.c-30 { width: 30px; } .c-32 { width: 32px; } .c-34 { width: 34px; } .c-36 { width: 36px; } .c-38 { width: 38px; }
th, td { padding: 0 0 0 8px; font-weight: normal; text-align: left; white-space: nowrap; }
th { height: 50px; padding-top: 2px; border-right: 2px solid #e5e5e5; background: linear-gradient(#efefef, #efefef) 0 100% / 100% 2px no-repeat #fff; }
th.d, td.d { padding-left: 11px; }
.sorted { display: flex; align-items: center; justify-content: space-between; padding-right: 14px; }
.sorted svg { width: 16px; height: 10px; fill: none; stroke: #555; stroke-width: 2; }
td { height: 32px; padding-bottom: 2px; border-right: 2px solid #c8c8c8; line-height: 26px; }
td.name { padding-left: 42px; }
td.g { background: linear-gradient(#efefef, #efefef) 0 0 / 100% 30px no-repeat; }
td.name.g { background-position: 32px 0; }
td.cb { padding: 0; }
td.cb input { margin: 0 auto; }

.dlg-foot { display: flex; align-items: center; gap: 14px; padding-top: 20px; height: 62px; flex: none; }
.counts { flex: 1; display: flex; gap: 20px; padding-left: 9px; white-space: nowrap; }
.counts b { font-size: 22px; }
```
FILE: app.js
```js
const svg = id => `<svg class="ic"><use href="#i-${id}"/></svg>`;

/* Guides: v line, t tee, l elbow, R/B/E expander (first, middle, last), - blank */
function tree(id, items) {
  document.getElementById(id).innerHTML = items.map(([guides, icon, text, cls = ""]) => {
    const cells = [...guides].map(g => {
      const box = "RBE".includes(g) ? `<button type="button" class="toggle" aria-label="Collapse ${text}"></button>` : "";
      return `<span class="guide g-${g}">${box}</span>`;
    }).join("");
    return `<li>${cells}${svg(icon)}<span class="${cls}">${text}</span></li>`;
  }).join("");
}

tree("tools-tree", [
  ["R", "folder", "Setup", "root"],
  ["vt", "gears", "Hardware Config"],
  ["vB", "service", "Services"],
  ["vvt", "server", "EtherNet/IP Adapter"],
  ["vvl", "globe", "Network Time Service"],
  ["vt", "key", "Security Accounts"],
  ["vl", "clock", "Set CPU Time/Date"],
  ["B", "folder", "Write Program", "root"],
  ["vt", "db", "Tag Database"],
  ["vt", "binder", "UDS Definitions"],
  ["vt", "iolist", "I/O Overview"],
  ["vt", "comment", "Rung Comments"],
  ["vt", "xref", "Tag Cross Reference"],
  ["vt", "compare", "Compare Project"],
  ["vE", "git", "Version Control"],
  ["v-t", "git", "Manage Project Repos"],
  ["v-t", "history", "History Log", "off"],
  ["v-l", "commit", "Commit", "off"],
  ["B", "folder", "Monitor &amp; Debug", "root"],
  ["vt", "dataview", "Data View"],
  ["vt", "logger", "Data Logger"],
  ["vt", "pid", "PID Tuning"],
  ["vt", "module", "HS Module Testing"],
  ["vt", "bits", "Bit Histogram"],
  ["vt", "words", "Word Histogram"],
  ["vt", "error", "CPU Error History"]
]);

tree("task-tree", [
  ["R", "yopen", "Tasks"],
  ["vt", "yopen", "Run First Scan Only"],
  ["vB", "yopen", "Run Every Scan"],
  ["vvl", "rungs", "New Task", "sel"],
  ["vt", "yopen", "Run Every Second"],
  ["vt", "yopen", "Run When Called"],
  ["vl", "yopen", "Disable Task"],
  ["E", "bopen", "Task Library"],
  ["-l", "bclosed", "Default"]
]);

document.getElementById("rungs").innerHTML =
  Array.from({ length: 16 }, (_, i) => `<li>${i + 1}</li>`).join("");

/* Tag rows: name, type, system id, I/O text */
const rows = [];
for (let n = 6; n <= 20; n++) {
  rows.push([`CPU Event Log String ${String(n).padStart(2, "0")}`, "String, System", `SSTR-0000${n + 40}`]);
}
["CPU Model Name", "CPU Program File Name", "Requested Module Name", "Firmware Version[CPU]", "PLC LCD Display[CPU]"]
  .forEach((name, i) => rows.push([name, "String, System", `SSTR-00010${i + 1}`]));
[1, 2, 3, 4, 33, 34, 35, 65, 66, 67]
  .forEach(n => rows.push([`MST-0.0.0.${n}`, "Module Status Bit", `MST-0.0.0.${n}`, "MS..."]));
for (let n = 1; n <= 7; n++) rows.push([`DI-0.1.1.${n}`, "Discrete Input", `DI-0.1.1.${n}`, "DI..."]);

const gray = (text = "") => `<td class="g">${text}</td>`;
const white = (text = "") => `<td>${text}</td>`;
const dots = '<td class="d">...</td>';
const check = name => `<td class="cb"><input type="checkbox" aria-label="Option for ${name}"></td>`;
const locked = name => `<td class="g cb"><input type="checkbox" disabled aria-label="Locked option for ${name}"></td>`;

document.getElementById("rows").innerHTML = rows.map(([name, type, id, io]) => {
  if (!io) {
    return `<tr><td class="name g">${name}</td>${gray(type)}${gray(id)}${gray()}${gray()}${gray()}${gray("50")}${gray()}${gray()}` +
      gray() + white() + gray() + gray() + gray() + gray() + dots + check(name) + dots + locked(name) + "</tr>";
  }
  return `<tr><td class="name">${name}</td>${white(type)}${gray(id)}${white(io)}${gray()}${gray()}${gray()}${gray()}${gray()}` +
    white() + white() + gray() + check(name) + check(name) + check(name) + (io === "MS..." ? dots : white()) + check(name) + gray() + locked(name) + "</tr>";
}).join("");
```
